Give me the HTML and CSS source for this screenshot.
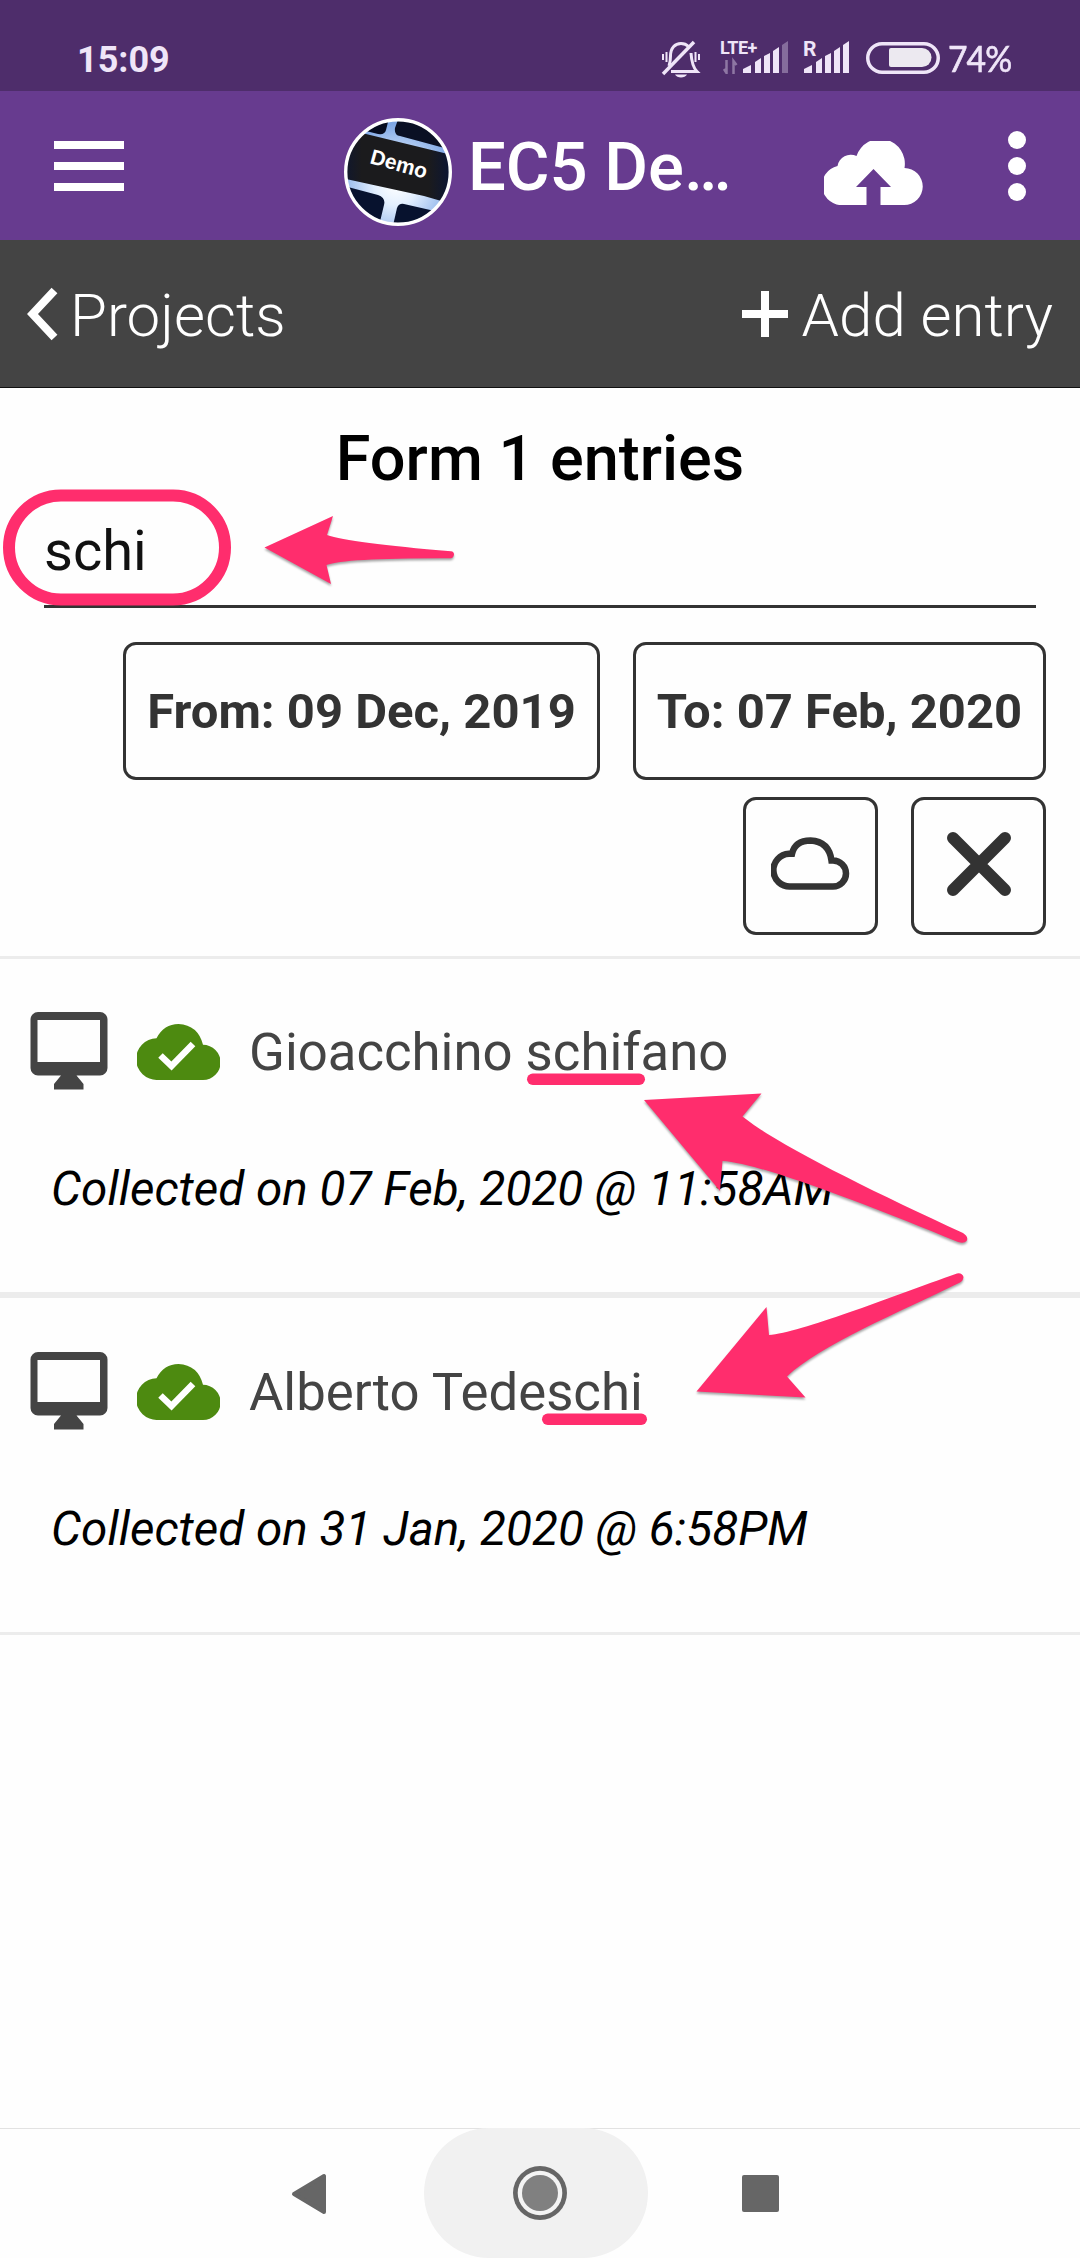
FILE: index.html
```html
<!DOCTYPE html>
<html lang="en">
<head>
<meta charset="utf-8">
<title>EC5 Demo - Form 1 entries</title>
<link rel="stylesheet" href="styles.css">
</head>
<body>
<div class="screen">
  <div class="status">
    <span class="clock">15:09</span>
    <div class="status-icons">
      <svg class="bell" width="42" height="40" viewBox="0 0 42 40" fill="none" stroke="#efe5f8" stroke-width="3">
        <path d="M9 27c1-3 1.500-6 1.500-10C10.500 9 15 4.500 21 4.500c3 0 5.500 1 7.500 3M31 14c.5 8 1.500 14 6 18.500H11" />
        <path d="M3 35 34 3" stroke-width="3.500"/>
        <path d="M6.500 13v10M3 15v6M35.500 13v10M39 15v6" stroke-width="2"/>
        <path d="M15 35.500h12c-2 4-10 4-12 0z" fill="#efe5f8" stroke="none"/>
      </svg>
      <div class="lte">
        <span class="lte-label">LTE+</span>
        <svg width="70" height="34" viewBox="0 0 70 34" fill="#efe5f8">
          <path d="M23 33v-4l8-4v8zM35 33V22l6-4v15zM44 33V16l6-3v20zM53 33V11l6-4v26z"/>
          <path d="M62 33V5l6-4v32z" opacity=".35"/>
          <path d="M6.500 20v13L4 29M13.500 34V21l3 4" fill="none" stroke="#efe5f8" stroke-width="2.500" opacity=".4"/>
        </svg>
      </div>
      <div class="roam">
        <span class="roam-label">R</span>
        <svg width="48" height="34" viewBox="0 0 48 34" fill="#efe5f8">
          <path d="M1 33v-4l8-4v8zM13 33V22l6-4v15zM22 33V16l6-3v20zM31 33V11l6-4v26zM40 33V5l6-4v32z"/>
        </svg>
      </div>
      <svg class="battery" width="74" height="32" viewBox="0 0 74 32">
        <rect x="1.750" y="1.750" width="70.500" height="28.500" rx="14.250" fill="none" stroke="#efe5f8" stroke-width="3.500"/>
        <path d="M25 6h31a9.500 9.500 0 0 1 0 19H25a2 2 0 0 1-2-2V8a2 2 0 0 1 2-2z" fill="#ece9f0"/>
      </svg>
      <span class="percent">74%</span>
    </div>
  </div>

  <header class="appbar">
    <svg class="menu" width="70" height="50" viewBox="0 0 70 50" fill="#fff"><path d="M0 0h70v8H0zM0 21h70v8H0zM0 42h70v8H0z"/></svg>
    <svg class="avatar" width="108" height="108" viewBox="0 0 108 108">
      <defs>
        <clipPath id="disc"><circle cx="54" cy="54" r="52"/></clipPath>
        <radialGradient id="glow" gradientUnits="userSpaceOnUse" cx="52" cy="66" r="60">
          <stop offset="0" stop-color="#fff"/><stop offset=".35" stop-color="#e4f0ff"/><stop offset="1" stop-color="#7fa8e6"/>
        </radialGradient>
        <linearGradient id="key"><stop offset="0" stop-color="#0a1536"/><stop offset=".22" stop-color="#1b1b1d"/><stop offset=".8" stop-color="#1b1b1d"/><stop offset="1" stop-color="#0a1536"/></linearGradient>
      </defs>
      <g clip-path="url(#disc)">
        <rect width="108" height="108" fill="url(#glow)"/>
        <path d="M-4 10 22 13 34 16Q41 17 42 12L46-4H-4z" fill="#060c20"/>
        <path d="M56-4 51 10Q50 17 56 18L108 32V-4z" fill="#0a1024"/>
        <path d="M-6 18Q8 13 22 16L108 37V86L80 78 2 61-8 56z" fill="url(#key)"/>
        <path d="M-4 67 34 77Q42 80 40 87L34 112H-4z" fill="#07122e"/>
        <path d="M60 86 108 97V112H48L53 90Q55 85 60 86z" fill="#07122e"/>
        <text x="25" y="45" class="avatar-text" transform="rotate(15.500 25 45)">Demo</text>
      </g>
      <circle cx="54" cy="54" r="52.300" fill="none" stroke="#fff" stroke-width="3.400"/>
    </svg>
    <h1 class="project">EC5 De…</h1>
    <svg class="upload" width="99" height="65" viewBox="0 0 99 65">
      <path fill="#fff" d="M20 64A19.800 19.800 0 0 1 13.500 25 13.500 13.500 0 0 1 32.500 15 24.800 24.800 0 0 1 80.500 27 18.500 18.500 0 0 1 80 64H56.500V46H67L49.500 28 32 46H42.500V64z"/>
    </svg>
    <svg class="dots" width="18" height="70" viewBox="0 0 18 70" fill="#fff"><circle cx="9" cy="9" r="9"/><circle cx="9" cy="35" r="9"/><circle cx="9" cy="61" r="9"/></svg>
  </header>

  <nav class="toolbar">
    <a class="tool"><svg class="chevron" width="31" height="54" viewBox="0 0 31 54"><path d="M27.500 3.500 5.500 27l22 23.500" fill="none" stroke="#fff" stroke-width="8"/></svg><span class="back-text">Projects</span></a>
    <a class="tool"><svg class="plus" width="46" height="46" viewBox="0 0 46 46"><path d="M19 0h8v19h19v8H27v19h-8V27H0v-8h19z" fill="#fff"/></svg><span class="add-text">Add entry</span></a>
  </nav>

  <main>
    <section class="filters">
      <h2 class="heading">Form 1 entries</h2>
      <div class="search">schi</div>
      <div class="buttons">
        <div class="btn date from"><span>From: 09 Dec, 2019</span></div>
        <div class="btn date to"><span>To: 07 Feb, 2020</span></div>
        <div class="btn icon"><svg width="79" height="54" viewBox="0 0 79 54"><path d="M19.500 49.500A16 16 0 0 1 18 16.800H21Q24 3.500 39.500 3.500 58 4.500 60.500 23.500H62A13 13 0 0 1 62 49.500z" fill="none" stroke="#333" stroke-width="6.500"/></svg></div>
        <div class="btn icon"><svg width="64" height="64" viewBox="0 0 64 64"><path d="M6 6 58 58M58 6 6 58" stroke="#333" stroke-width="12" stroke-linecap="round"/></svg></div>
      </div>
    </section>

    <article class="entry">
      <div class="entry-head">
        <svg width="78" height="78" viewBox="0 0 78 78"><path fill="#444" fill-rule="evenodd" d="M8 0H70A7.500 7.500 0 0 1 77.500 7.500V56A7.500 7.500 0 0 1 70 63.500H46.500L53.500 72V77.500H24V72L31 63.500H8A7.500 7.500 0 0 1 .5 56V7.500A7.500 7.500 0 0 1 8 0zM7.500 8V50H70V8z"/></svg>
        <svg class="synced" width="83" height="56" viewBox="0 0 83 56"><path fill="#4d8a10" d="M20.500 56A20.400 20.400 0 0 1 19.500 14.200Q27 0 41.500 0 61 1 66 20.800A17.600 17.600 0 0 1 66 56z"/><path fill="none" stroke="#fff" stroke-width="6.500" d="M23.500 31.500 34.500 42 56 20"/></svg>
        <span class="name">Gioacchino schifano</span>
      </div>
      <div class="collected">Collected on 07 Feb, 2020 @ 11:58AM</div>
    </article>

    <article class="entry last">
      <div class="entry-head">
        <svg width="78" height="78" viewBox="0 0 78 78"><path fill="#444" fill-rule="evenodd" d="M8 0H70A7.500 7.500 0 0 1 77.500 7.500V56A7.500 7.500 0 0 1 70 63.500H46.500L53.500 72V77.500H24V72L31 63.500H8A7.500 7.500 0 0 1 .5 56V7.500A7.500 7.500 0 0 1 8 0zM7.500 8V50H70V8z"/></svg>
        <svg class="synced" width="83" height="56" viewBox="0 0 83 56"><path fill="#4d8a10" d="M20.500 56A20.400 20.400 0 0 1 19.500 14.200Q27 0 41.500 0 61 1 66 20.800A17.600 17.600 0 0 1 66 56z"/><path fill="none" stroke="#fff" stroke-width="6.500" d="M23.500 31.500 34.500 42 56 20"/></svg>
        <span class="name">Alberto Tedeschi</span>
      </div>
      <div class="collected">Collected on 31 Jan, 2020 @ 6:58PM</div>
    </article>
  </main>

  <footer class="navbar">
    <svg width="36" height="42" viewBox="0 0 36 42"><path d="M3 21 33 3V39z" fill="#666" stroke="#666" stroke-width="4" stroke-linejoin="round"/></svg>
    <div class="home"><svg width="54" height="54" viewBox="0 0 54 54"><circle cx="27" cy="27" r="27" fill="#666"/><circle cx="27" cy="27" r="22.300" fill="#f4f4f4"/><circle cx="27" cy="27" r="18" fill="#808080"/></svg></div>
    <svg width="37" height="37" viewBox="0 0 37 37"><rect width="37" height="37" rx="2" fill="#666"/></svg>
  </footer>

  <!-- hand-drawn markup over the screen -->
  <svg class="marks" width="1080" height="2258" viewBox="0 0 1080 2258" fill="#ff2d6d">
    <rect x="9" y="495.500" width="216" height="104" rx="52" fill="none" stroke="#ff2d6d" stroke-width="12"/>
    <rect x="527" y="1073.500" width="118" height="11.500" rx="5.750"/>
    <rect x="542" y="1413.500" width="105" height="11.500" rx="5.750"/>
    <g class="arrows">
      <path d="M264.500 547.500 333 516 327 535Q350 543 451 551.200Q454 551.500 454 554.500 453.500 558 450.500 558.300Q345 558 326.500 565L331 584z"/>
      <path d="M644 1100 761.500 1093.500 742.500 1116.500C778 1145 870 1190 963 1233Q969 1237 966.500 1241 964 1244 958 1242C870 1206 760 1163 722.500 1161L720 1191z"/>
      <path d="M696.500 1391.500 766.500 1307 769 1335C800 1333 890 1297 957 1273.500Q962 1272.500 963.500 1277 963 1281 960 1282.500C900 1312 820 1345 787 1376.500L805.500 1397.500z"/>
    </g>
  </svg>
</div>
</body>
</html>
```
FILE: styles.css
```css
* { box-sizing: border-box; }
body { margin: 0; font-family: Roboto, sans-serif; background: #fefefe; }
svg { display: block; flex: none; }
h1, h2 { margin: 0; }
.screen { position: relative; width: 1080px; height: 2258px; display: flex; flex-direction: column; background: #fefefe; overflow: hidden; white-space: nowrap; }

.status { height: 91px; padding: 28px 68px 0 77px; display: flex; justify-content: space-between; background: #4e2d6b; color: #efe5f8; }
.clock { padding-top: 1px; font-size: 36px; font-weight: 700; line-height: 63px; }
.status-icons { display: flex; align-items: flex-start; padding-top: 12px; width: 351px; }
.bell { margin: -1px 0 0 -1px; }
.lte { position: relative; margin: 0 0 0 18px; }
.lte-label { position: absolute; left: 0; top: -2px; font: 700 18px/20px Roboto, sans-serif; letter-spacing: -.5px; }
.roam { position: relative; margin-left: 13px; }
.roam-label { position: absolute; left: 0; top: -2px; font: 700 21px/22px Roboto, sans-serif; }
.battery { margin: 2px 0 0 15px; }
.percent { margin-left: 8px; font: 400 37px/36px Lato, sans-serif; letter-spacing: -1px; -webkit-text-stroke: .6px #efe5f8; transform: scaleX(.91); transform-origin: left; }

.appbar { height: 149px; display: flex; align-items: flex-start; background: #673b8f; color: #fff; }
.menu { margin: 50px 0 0 54px; }
.avatar { margin: 27px 0 0 220px; }
.avatar-text { font: 700 21px "Liberation Sans", sans-serif; fill: #fff; }
.project { margin: 2px 0 0 16px; width: 260px; font-size: 67px; font-weight: 500; line-height: 148px; }
.upload { margin: 50px 0 0 96px; }
.dots { margin: 40px 0 0 85px; }

.toolbar { height: 148px; padding: 5px 27px 0; display: flex; justify-content: space-between; align-items: center; background: #444; border-bottom: 1px solid #111; color: #fff; font-size: 60px; font-weight: 300; }
.tool { display: flex; align-items: center; line-height: 80px; }
.chevron { margin-top: -4px; }
.back-text { margin-left: 12px; }
.add-text { margin-left: 14px; }
.plus { margin-top: -4px; }

.filters { height: 568px; }
.heading { padding-top: 31px; font-size: 63px; font-weight: 500; line-height: 80px; text-align: center; color: #000; }
.search { height: 109px; margin: 0 44px; padding-top: 16px; border-bottom: 3px solid #333; font-size: 56px; line-height: 72px; color: #111; }
.buttons { display: flex; flex-wrap: wrap; justify-content: flex-end; gap: 17px 33px; padding: 34px 34px 0; }
.btn { height: 138px; border: 3px solid #333; border-radius: 13px; display: flex; align-items: center; justify-content: center; color: #333; font-size: 49px; font-weight: 700; }
.from { width: 477px; }
.to { width: 413px; }
.icon { width: 135px; padding-bottom: 5px; }

.entry { height: 339px; border-top: 3px solid #ececec; border-bottom: 3px solid #ececec; }
.last { height: 340px; }
.entry-head { height: 78px; margin: 53px 0 0 30px; display: flex; align-items: center; }
.synced { margin: 1px 0 0 29px; }
.name { margin-left: 29px; padding-top: 2px; font-size: 52.700px; line-height: 78px; color: #444; }
.collected { margin: 60px 0 0 51px; font-size: 47.650px; font-style: italic; line-height: 78px; color: #000; }
.last .entry-head { margin-top: 54px; }

.navbar { height: 130px; margin-top: auto; border-top: 1px solid #e2e2e2; padding: 0 301px 0 291px; display: flex; justify-content: space-between; align-items: center; }
.home { width: 224px; height: 130px; margin: -1px 0 0 3px; padding-left: 8px; border-radius: 65px; background: #f1f1f1; display: flex; align-items: center; justify-content: center; }
.marks { position: absolute; left: 0; top: 0; }
.arrows { filter: drop-shadow(0 2px 1px rgba(0, 0, 0, .35)); }
```
